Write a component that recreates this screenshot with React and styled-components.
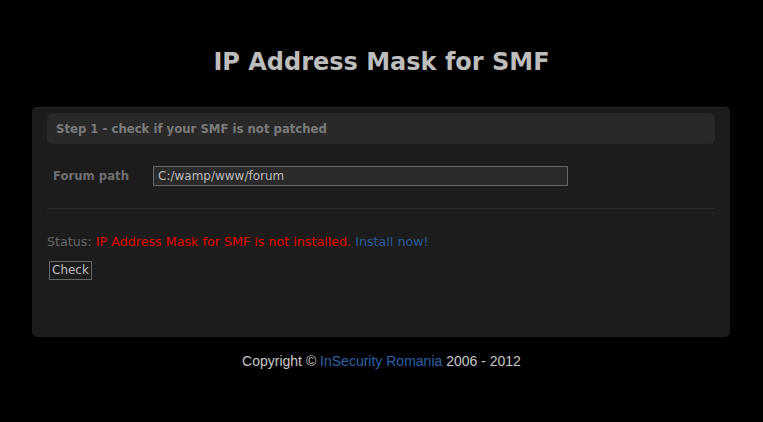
import styled, { createGlobalStyle } from "styled-components";

const Global = createGlobalStyle`
  html, body {
    margin: 0;
    padding: 0;
    background: #000;
  }
  body {
    font-family: "DejaVu Sans", Verdana, sans-serif;
    font-size: 12px;
    color: #bbb;
  }
`;

const Page = styled.div`
  width: 100%;
  min-height: 422px;
  padding-top: 48px;
  box-sizing: border-box;
`;

const Title = styled.h1`
  margin: 0 0 30px;
  text-align: center;
  font-size: 24px;
  line-height: 29px;
  font-weight: 700;
  color: #bdbdbd;
`;

const Panel = styled.div`
  width: 698px;
  height: 230px;
  margin: 0 32px;
  box-sizing: border-box;
  padding: 5px 15px;
  background: #1c1c1c;
  border-top: 1px solid #262626;
  border-radius: 5px;
`;

const StepHeader = styled.div`
  height: 31px;
  display: flex;
  align-items: center;
  padding-left: 9px;
  background: #292929;
  border-radius: 6px;
  font-weight: 700;
  font-size: 11.7px;
  color: #7b7b7b;
`;

const FieldRow = styled.div`
  display: flex;
  align-items: center;
  margin-top: 22px;
  padding-left: 6px;
`;

const Label = styled.label`
  width: 100px;
  font-weight: 700;
  font-size: 11.7px;
  color: #6f6f6f;
`;

const PathInput = styled.input`
  width: 415px;
  height: 20px;
  box-sizing: border-box;
  padding: 0 4px;
  background: #2a2a2a;
  border: 1px solid #666;
  color: #bbb;
  font-family: "DejaVu Sans", Verdana, sans-serif;
  font-size: 12px;
  outline: none;
`;

const Divider = styled.hr`
  margin: 22px 0 0;
  border: 0;
  border-top: 1px solid #2b2b2b;
`;

const Status = styled.p`
  margin: 24px 0 0;
  font-size: 12.7px;
  line-height: 17px;
  color: #666;
`;

const Error = styled.span`
  color: #e80000;
`;

const Link = styled.a`
  color: #2a5c9a;
  text-decoration: none;
`;

const Button = styled.button`
  margin: 11px 0 0 2px;
  height: 19px;
  padding: 0 2px;
  background: #1c1c1c;
  border: 1px solid #666;
  color: #bbb;
  font-family: "DejaVu Sans", Verdana, sans-serif;
  font-size: 12px;
  line-height: 15px;
  cursor: pointer;
`;

const Footer = styled.div`
  margin-top: 16px;
  text-align: center;
  font-family: "Liberation Sans", Arial, sans-serif;
  font-size: 14px;
  color: #c8c8c8;
`;

const FooterLink = styled.a`
  color: #2a62a8;
  text-decoration: none;
`;

export default function App() {
  return (
    <>
      <Global />
      <Page>
        <Title>IP Address Mask for SMF</Title>
        <Panel>
          <StepHeader>Step 1 - check if your SMF is not patched</StepHeader>
          <FieldRow>
            <Label>Forum path</Label>
            <PathInput defaultValue="C:/wamp/www/forum" />
          </FieldRow>
          <Divider />
          <Status>
            Status: <Error>IP Address Mask for SMF is not installed.</Error>{" "}
            <Link href="#">Install now!</Link>
          </Status>
          <Button>Check</Button>
        </Panel>
        <Footer>
          Copyright © <FooterLink href="#">InSecurity Romania</FooterLink> 2006 - 2012
        </Footer>
      </Page>
    </>
  );
}
